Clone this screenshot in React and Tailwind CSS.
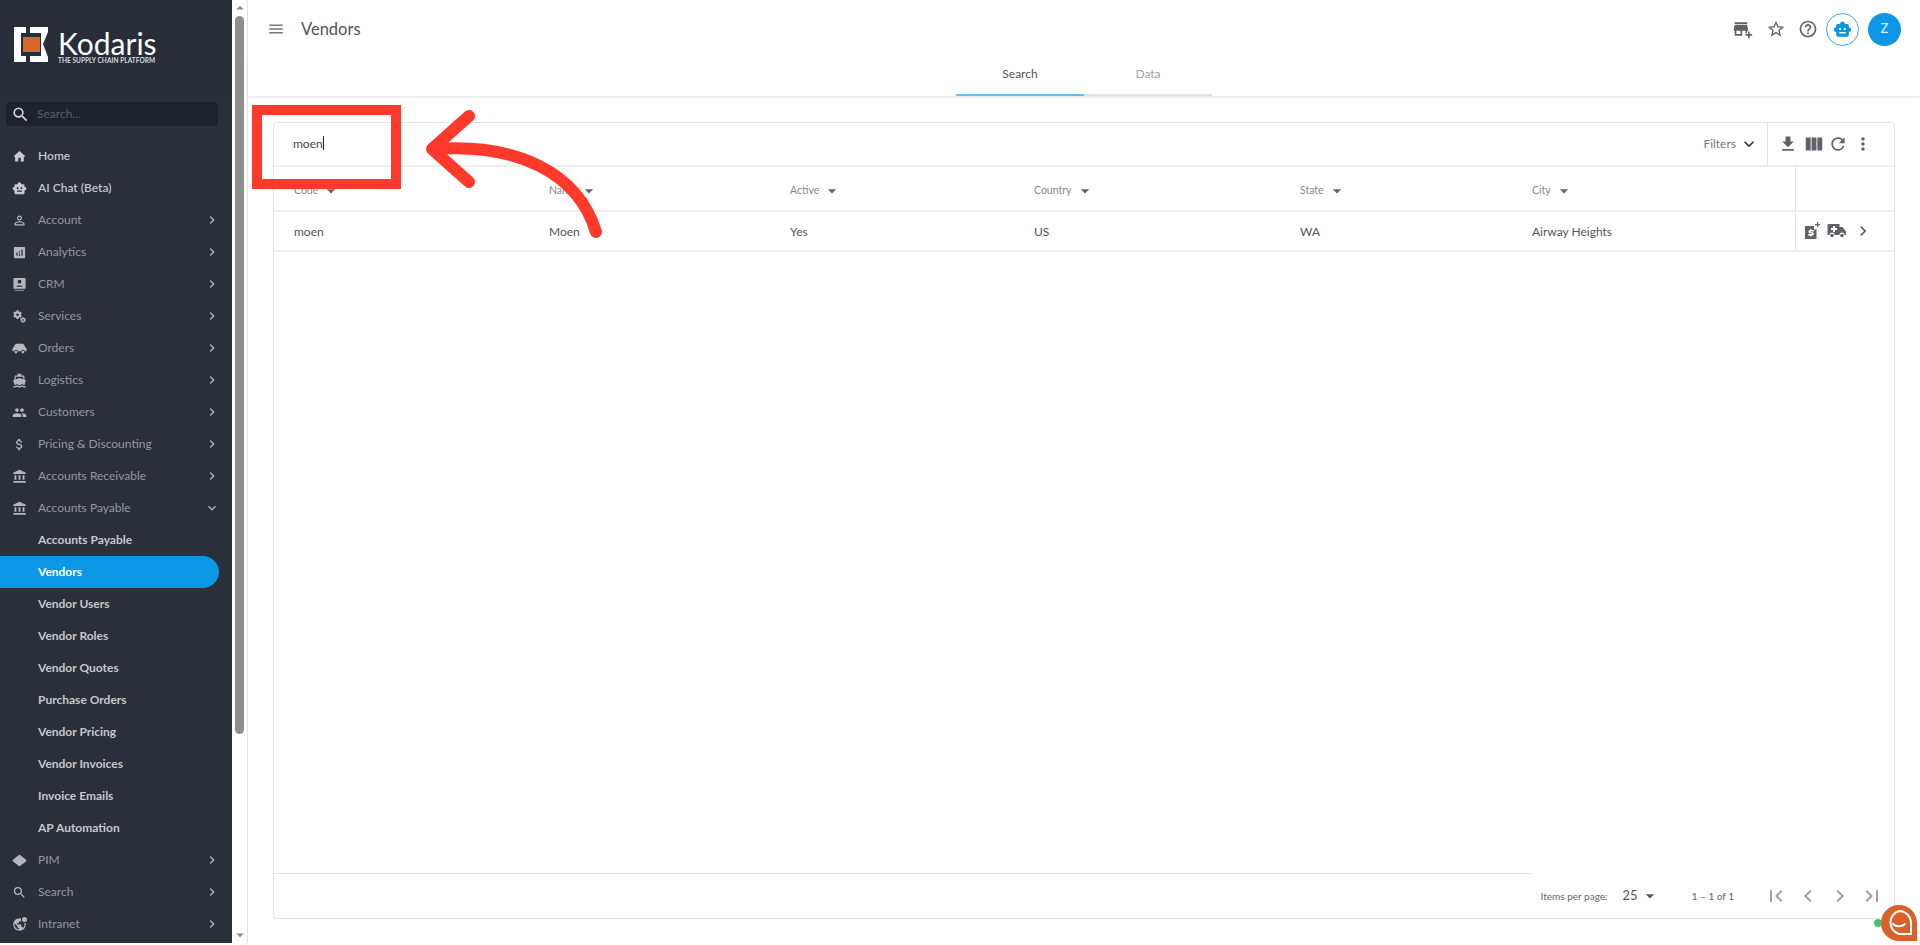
import {
  MdHome, MdSmartToy, MdPersonOutline, MdAnalytics, MdMiscellaneousServices,
  MdDirectionsBoat, MdPeople, MdAttachMoney, MdAccountBalance,
  MdSearch, MdPublic, MdChevronRight, MdExpandMore, MdMenu, MdAddBusiness, MdStarBorder,
  MdHelpOutline, MdFileDownload, MdViewColumn, MdRefresh, MdMoreVert, MdArrowDropDown,
  MdFirstPage, MdChevronLeft, MdLastPage, MdArrowDropUp,
} from "react-icons/md";

const CrmIcon = ({ className }) => (
  <svg viewBox="0 0 16 16" fill="currentColor" className={className}>
    <path d="M2.500 1h11a1 1 0 0 1 1 1v9.500a1 1 0 0 1-1 1h-11a1 1 0 0 1-1-1V2a1 1 0 0 1 1-1z" />
    <circle cx="8" cy="5" r="2" fill="#2a2f3a" />
    <path d="M4.500 10.500c0-2 7-2 7 0z" fill="#2a2f3a" />
    <rect x="3" y="13.500" width="10" height="1.500" opacity="0.6" />
  </svg>
);

const CarIcon = ({ className }) => (
  <svg viewBox="0 0 16 16" fill="currentColor" className={className}>
    <path d="M5 3h6c1.500 0 2.400 1.500 3 3.500 1 .5 1.500 1.500 1.500 2.500v2h-1.600a2.200 2.200 0 0 0-4.300 0H6.400a2.200 2.200 0 0 0-4.300 0H.500V9c0-1 .5-2 1.500-2.500C2.600 4.500 3.500 3 5 3z" />
    <circle cx="4.300" cy="11.800" r="1.500" />
    <circle cx="11.700" cy="11.800" r="1.500" />
  </svg>
);

const PimIcon = ({ className }) => (
  <svg viewBox="0 0 16 16" fill="currentColor" className={className}>
    <path d="M7 2.300a1.500 1.500 0 0 1 2 0l5.800 4.700a1.300 1.300 0 0 1 0 2L9 13.700a1.500 1.500 0 0 1-2 0L1.200 9a1.300 1.300 0 0 1 0-2z" />
  </svg>
);

const IntranetIcon = ({ className }) => (
  <span className={`relative inline-block ${className}`}>
    <MdPublic className="size-full" />
    <span className="absolute right-0 top-0 size-[5px] rounded-full bg-[#b5b7bb] ring-1 ring-[#2a2f3a]" />
  </span>
);

const topNav = [
  { label: "Home", icon: MdHome, bright: true },
  { label: "AI Chat (Beta)", icon: MdSmartToy, bright: true },
  { label: "Account", icon: MdPersonOutline, more: true },
  { label: "Analytics", icon: MdAnalytics, more: true },
  { label: "CRM", icon: CrmIcon, more: true },
  { label: "Services", icon: MdMiscellaneousServices, more: true },
  { label: "Orders", icon: CarIcon, more: true },
  { label: "Logistics", icon: MdDirectionsBoat, more: true },
  { label: "Customers", icon: MdPeople, more: true },
  { label: "Pricing & Discounting", icon: MdAttachMoney, more: true },
  { label: "Accounts Receivable", icon: MdAccountBalance, more: true },
];

const subNav = [
  "Accounts Payable", "Vendors", "Vendor Users", "Vendor Roles", "Vendor Quotes",
  "Purchase Orders", "Vendor Pricing", "Vendor Invoices", "Invoice Emails", "AP Automation",
];

const bottomNav = [
  { label: "PIM", icon: PimIcon },
  { label: "Search", icon: MdSearch },
  { label: "Intranet", icon: IntranetIcon },
];

const columns = [
  { label: "Code", value: "moen", width: "w-[255px]" },
  { label: "Name", value: "Moen", width: "w-[241px]" },
  { label: "Active", value: "Yes", width: "w-[244px]" },
  { label: "Country", value: "US", width: "w-[266px]" },
  { label: "State", value: "WA", width: "w-[232px]" },
  { label: "City", value: "Airway Heights", width: "w-[283px]" },
];

const NavRow = ({ item }) => {
  const Icon = item.icon;
  return (
    <div className="flex h-8 items-center pl-[12px] pr-[12px]">
      <Icon className={`size-[15px] shrink-0 ${item.bright ? "text-[#c9cacd]" : "text-[#b5b7bb]"}`} />
      <span className={`ml-[11px] flex-1 text-[12px] ${item.bright ? "font-semibold text-[#c4c5c8]" : "text-[#96989d]"}`}>
        {item.label}
      </span>
      {item.more && <MdChevronRight className="size-[16px] text-[#b5b7bb]" />}
    </div>
  );
};

const Logo = () => (
  <div className="flex h-[95px] shrink-0 items-start bg-[#282d38] pl-[14px] pt-[27px]">
    <svg width="34" height="35" viewBox="0 0 34 35" className="shrink-0">
      <path d="M0 0H12V6H7V29H12V35H0Z" fill="#fff" />
      <path d="M16 0H34V5L29 17L34 30V35H16V29H27V6H16Z" fill="#fff" />
      <rect x="9" y="10" width="17" height="15" fill="#d9662a" />
    </svg>
    <div className="ml-[10px] flex flex-col">
      <span className="mt-[4px] text-[30px] leading-[25px] text-white">Kodaris</span>
      <span className="mt-[1px] whitespace-nowrap text-[6.500px] font-bold leading-[7px] tracking-[0.050px] text-[#d8d9db]">
        THE SUPPLY CHAIN PLATFORM
      </span>
    </div>
  </div>
);

const Sidebar = () => (
  <aside className="flex h-[943px] w-[232px] shrink-0 flex-col bg-[#2a2f3a]">
    <Logo />
    <div className="ml-[6px] mt-[7px] flex h-[24px] w-[212px] items-center rounded bg-[#1e222c] pl-[5px]">
      <MdSearch className="size-[19px] text-[#d6d7d9]" />
      <span className="ml-[7px] text-[12px] text-[#5a5e66]">Search...</span>
    </div>
    <nav className="mt-[14px] flex flex-col">
      {topNav.map((item) => (
        <NavRow key={item.label} item={item} />
      ))}
      <div className="flex h-8 items-center pl-[12px] pr-[12px]">
        <MdAccountBalance className="size-[15px] shrink-0 text-[#b5b7bb]" />
        <span className="ml-[11px] flex-1 text-[12px] text-[#96989d]">Accounts Payable</span>
        <MdExpandMore className="size-[16px] text-[#b5b7bb]" />
      </div>
      {subNav.map((label) =>
        label === "Vendors" ? (
          <div key={label} className="flex h-8 w-[219px] items-center rounded-r-full bg-[#0b96e6] pl-[38px] text-[12px] font-bold text-white">
            {label}
          </div>
        ) : (
          <div key={label} className="flex h-8 items-center pl-[38px] text-[12px] font-bold text-[#c6c7ca]">
            {label}
          </div>
        )
      )}
      {bottomNav.map((item) => (
        <NavRow key={item.label} item={{ ...item, more: true }} />
      ))}
    </nav>
  </aside>
);

const Scrollbar = () => (
  <div className="flex h-[945px] w-[16px] shrink-0 flex-col items-center border-r border-[#e3e3e3] bg-white">
    <MdArrowDropUp className="-my-[1px] size-[18px] text-[#8c8c8c]" />
    <div className="h-[718px] w-[9px] rounded-full bg-[#8e8e8e]" />
    <div className="flex-1" />
    <MdArrowDropDown className="mb-[1px] size-[18px] text-[#8c8c8c]" />
  </div>
);

const Header = () => (
  <header className="flex h-[58px] items-center pl-[19px] pr-[19px]">
    <MdMenu className="size-[18px] text-[#777]" />
    <span className="ml-[16px] flex-1 text-[16.500px] text-[#555]">Vendors</span>
    <div className="flex items-center text-[#5f6368]">
      <MdAddBusiness className="size-[20px]" />
      <MdStarBorder className="ml-[13px] size-[20px]" />
      <MdHelpOutline className="ml-[12px] size-[20px]" />
      <div className="ml-[8px] flex size-[33px] items-center justify-center rounded-full border border-[#3ba5e6]">
        <MdSmartToy className="size-[19px] text-[#0b96e6]" />
      </div>
      <div className="ml-[9px] flex size-[33px] items-center justify-center rounded-full bg-[#0b96e6] text-[13px] font-semibold text-[#cfeafb]">
        Z
      </div>
    </div>
  </header>
);

const Tabs = () => (
  <div className="flex h-[39px] justify-center border-b border-[#ececec] shadow-[0_1px_2px_rgba(0,0,0,0.06)]">
    <div className="flex w-[128px] items-center justify-center border-b-2 border-[#6bbde9] pb-[4px] text-[12px] text-[#555]">
      Search
    </div>
    <div className="flex w-[128px] items-center justify-center border-b-2 border-[#e2e2e2] pb-[4px] text-[12px] text-[#a3a3a3]">
      Data
    </div>
  </div>
);

const AmbulanceIcon = () => (
  <svg width="20" height="16" viewBox="0 0 20 16" fill="#5f6368">
    <path d="M1.500 1h11v3h3l3.500 4.500V12h-1.500a2.500 2.500 0 0 0-5 0h-5a2.500 2.500 0 0 0-5 0H.500V2a1 1 0 0 1 1-1z" />
    <circle cx="5" cy="12.500" r="1.800" />
    <circle cx="15" cy="12.500" r="1.800" />
    <path d="M6 3h2v2h2v2H8v2H6V7H4V5h2z" fill="#fff" />
  </svg>
);

const QuoteIcon = () => (
  <svg width="16" height="18" viewBox="0 0 16 18" fill="#5f6368">
    <path d="M1 4h9v3.500h2.500V17H1z" />
    <path d="M13 0h1.200v2H16v1.200h-1.800V5H13V3.200h-2V2h2z" />
    <path d="M6 7h1.500v1H10v1.500H7c-.6 0-.6.800 0 .8h1.500c1.800 0 1.800 3.200 0 3.200H7.500v1H6v-1H4V12h3.200c.6 0 .6-.8 0-.8H5.800C4 11.200 4 8 5.800 8H6z" fill="#fff" />
  </svg>
);

const VendorCard = () => (
  <section className="mx-[25px] mt-[25px] flex h-[797px] flex-col rounded border border-[#e2e2e2] bg-white">
    <div className="flex h-[44px] shrink-0 items-center border-b-2 border-[#efefef]">
      <span className="mb-[2px] ml-[19px] flex-1 text-[12px] text-[#444]">
        moen<span className="inline-block h-[14px] w-px translate-y-[2px] bg-[#222]" />
      </span>
      <span className="text-[12px] text-[#777]">Filters</span>
      <MdExpandMore className="ml-[3px] size-[20px] text-[#333]" />
      <div className="ml-[8px] flex h-full w-[127px] items-center border-l border-[#e2e2e2] pl-[10px] text-[#5f6368]">
        <MdFileDownload className="size-[20px]" />
        <MdViewColumn className="ml-[5px] size-[22px]" />
        <MdRefresh className="ml-[3px] size-[20px]" />
        <MdMoreVert className="ml-[5px] size-[20px]" />
      </div>
    </div>
    <div className="flex h-[45px] shrink-0 border-b-2 border-[#efefef]">
      {columns.map((col) => (
        <div key={col.label} className={`flex items-center pl-[20px] pt-[4px] ${col.width}`}>
          <span className="text-[10.500px] text-[#888]">{col.label}</span>
          <MdArrowDropDown className="ml-[3px] size-[20px] text-[#666]" />
        </div>
      ))}
      <div className="w-[99px] border-l border-[#e2e2e2]" />
    </div>
    <div className="flex h-[40px] shrink-0 border-b-2 border-[#efefef]">
      {columns.map((col) => (
        <div key={col.label} className={`flex items-center pl-[20px] pt-[2px] text-[12px] text-[#555] ${col.width}`}>
          {col.value}
        </div>
      ))}
      <div className="flex w-[99px] items-center border-l border-[#e2e2e2] pl-[8px]">
        <QuoteIcon />
        <span className="ml-[7px]"><AmbulanceIcon /></span>
        <MdChevronRight className="ml-[6px] size-[20px] text-[#5f6368]" />
      </div>
    </div>
    <div className="flex-1" />
    <div className="h-px w-[1257px] bg-[#e4e4e4]" />
    <div className="flex h-[44px] shrink-0 items-center justify-end pr-[10px]">
      <span className="text-[10px] text-[#666]">Items per page:</span>
      <span className="ml-[15px] text-[13px] text-[#555]">25</span>
      <MdArrowDropDown className="ml-[2px] size-[20px] text-[#555]" />
      <span className="ml-[32px] text-[10px] text-[#666]">1 – 1 of 1</span>
      <div className="ml-[30px] flex items-center gap-[8px] text-[#a0a0a0]">
        <MdFirstPage className="size-[24px]" />
        <MdChevronLeft className="size-[24px]" />
        <MdChevronRight className="size-[24px]" />
        <MdLastPage className="size-[24px]" />
      </div>
    </div>
  </section>
);

const Annotation = () => (
  <>
    <div className="absolute left-[252px] top-[105px] h-[84px] w-[149px] border-[10px] border-[#ff3a2d]" />
    <svg className="absolute left-[420px] top-[105px]" width="190" height="140" viewBox="420 105 190 140" fill="none">
      <path
        d="M596 232C578 172 516 143 434 149M469 116L432 149L469 182"
        stroke="#ff3a2d"
        strokeWidth="12"
        strokeLinecap="round"
        strokeLinejoin="round"
      />
    </svg>
  </>
);

const ChatBubble = () => (
  <div className="absolute left-[1873px] top-[904px] flex items-center">
    <div className="size-[10px] rounded-full border border-white bg-[#3cc36b]" />
    <svg width="38" height="38" viewBox="0 0 38 38" className="-ml-[3px]">
      <path d="M19 1a18 18 0 0 1 18 18v18H19A18 18 0 0 1 19 1z" fill="#d9622b" />
      <path d="M19 7a12 12 0 0 1 12 12v11H19A12 12 0 0 1 19 7z" fill="none" stroke="#fff" strokeWidth="2" />
      <path d="M13 20c3 3 9 3 12 0" fill="none" stroke="#fff" strokeWidth="2" strokeLinecap="round" />
    </svg>
  </div>
);

export default function App() {
  return (
    <div className="relative flex h-[945px] w-[1920px] overflow-hidden bg-white font-['Lato',sans-serif]">
      <Sidebar />
      <Scrollbar />
      <main className="min-w-0 flex-1">
        <Header />
        <Tabs />
        <VendorCard />
      </main>
      <Annotation />
      <ChatBubble />
    </div>
  );
}
